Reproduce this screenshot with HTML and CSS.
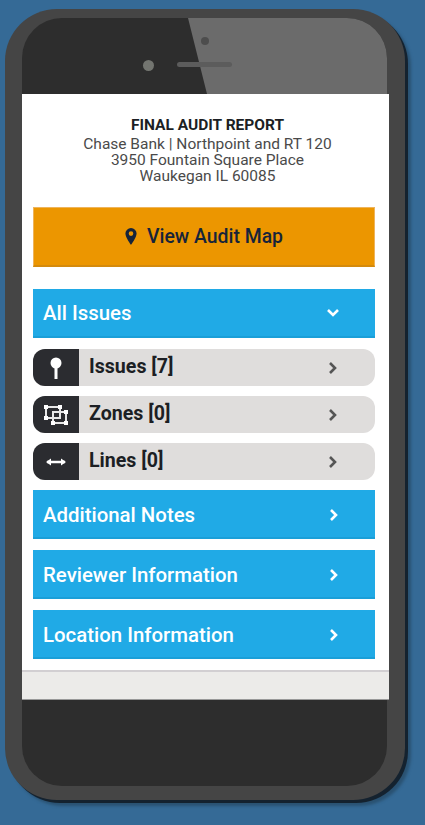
FILE: index.html
```html
<!DOCTYPE html>
<html lang="en">
<head>
<meta charset="utf-8">
<title>Final Audit Report</title>
<link rel="stylesheet" href="styles.css">
</head>
<body>
<div class="phone">
  <div class="bezel">
    <div class="top">
      <svg class="glare" width="365" height="76" viewBox="0 0 365 76"><polygon points="166,0 365,0 365,76 185,76" fill="#6b6b6b"/></svg>
      <span class="camera"></span>
      <span class="lens"></span>
      <span class="speaker"></span>
    </div>
    <main class="screen">
      <div class="content">
        <header class="head">
          <h1>FINAL AUDIT REPORT</h1>
          <p>Chase Bank | Northpoint and RT 120</p>
          <p>3950 Fountain Square Place</p>
          <p>Waukegan IL 60085</p>
        </header>
        <div class="map">
          <svg width="12" height="17" viewBox="0 0 12 17"><path fill-rule="evenodd" d="M6 0a5.6 5.6 0 0 0-5.6 5.6C.4 9.4 6 17 6 17s5.6-7.600 5.600-11.400A5.600 5.600 0 0 0 6 0zm0 3.300a2.300 2.300 0 1 1 0 4.600 2.300 2.300 0 0 1 0-4.600z" fill="#16243a"/></svg>
          <span>View Audit Map</span>
        </div>
        <div class="bar open">
          <span>All Issues</span>
          <svg width="14" height="10" viewBox="0 0 14 10"><path d="M2 2l5 5 5-5" fill="none" stroke="#fff" stroke-width="2.600"/></svg>
        </div>
        <div class="rows">
          <div class="row">
            <span class="tag"><svg width="20" height="26" viewBox="0 0 20 26"><circle cx="10" cy="8" r="5.500" fill="#fff"/><rect x="8.500" y="12" width="3" height="12" fill="#fff"/></svg></span>
            <span class="label">Issues [7]</span>
            <svg class="go" width="10" height="14" viewBox="0 0 10 14"><path d="M2 2l5 5-5 5" fill="none" stroke="#555" stroke-width="2.600"/></svg>
          </div>
          <div class="row">
            <span class="tag"><svg width="28" height="24" viewBox="0 0 28 24"><g fill="none" stroke="#e8e8e8" stroke-width="2"><rect x="4" y="4" width="14" height="11"/><rect x="11" y="9" width="13" height="11"/></g><g fill="#fff"><rect x="2" y="2" width="4" height="4"/><rect x="16" y="2" width="4" height="4"/><rect x="2" y="13" width="4" height="4"/><rect x="22" y="7" width="4" height="4"/><rect x="9" y="18" width="4" height="4"/><rect x="22" y="18" width="4" height="4"/></g></svg></span>
            <span class="label">Zones [0]</span>
            <svg class="go" width="10" height="14" viewBox="0 0 10 14"><path d="M2 2l5 5-5 5" fill="none" stroke="#555" stroke-width="2.600"/></svg>
          </div>
          <div class="row">
            <span class="tag"><svg width="24" height="12" viewBox="0 0 24 12"><path d="M3 6h18" stroke="#fff" stroke-width="2.500"/><path d="M2 6l5-3.500v7zM22 6l-5-3.500v7z" fill="#fff"/></svg></span>
            <span class="label">Lines [0]</span>
            <svg class="go" width="10" height="14" viewBox="0 0 10 14"><path d="M2 2l5 5-5 5" fill="none" stroke="#555" stroke-width="2.600"/></svg>
          </div>
        </div>
        <div class="bar">
          <span>Additional Notes</span>
          <svg width="14" height="14" viewBox="0 0 14 14"><path d="M4 2l5 5-5 5" fill="none" stroke="#fff" stroke-width="2.600"/></svg>
        </div>
        <div class="bar">
          <span>Reviewer Information</span>
          <svg width="14" height="14" viewBox="0 0 14 14"><path d="M4 2l5 5-5 5" fill="none" stroke="#fff" stroke-width="2.600"/></svg>
        </div>
        <div class="bar">
          <span>Location Information</span>
          <svg width="14" height="14" viewBox="0 0 14 14"><path d="M4 2l5 5-5 5" fill="none" stroke="#fff" stroke-width="2.600"/></svg>
        </div>
      </div>
      <div class="footer"></div>
    </main>
  </div>
</div>
</body>
</html>
```
FILE: styles.css
```css
* { box-sizing: border-box; }
html, body { margin: 0; height: 100%; }
body {
  background: #356a96;
  padding: 9px 0 0 5px;
  overflow: hidden;
  font-family: Roboto, "Liberation Sans", sans-serif;
}
.phone {
  width: 400px;
  height: 791px;
  padding: 9px 18px 14px 17px;
  background: #454545;
  border-radius: 52px;
  box-shadow: 3px 3px 0 #14222f, 6px 6px 3px #2a5272;
}
.bezel {
  width: 365px;
  height: 768px;
  background: #2d2d2d;
  border-radius: 40px;
  display: flex;
  flex-direction: column;
}
.top {
  position: relative;
  height: 76px;
  flex: none;
  border-radius: 40px 40px 0 0;
  overflow: hidden;
}
.glare { position: absolute; left: 0; top: 0; display: block; }
.camera {
  position: absolute; left: 179px; top: 19px;
  width: 8px; height: 8px; border-radius: 50%;
  background: #4d4d4d;
}
.lens {
  position: absolute; left: 121px; top: 42px;
  width: 11px; height: 11px; border-radius: 50%;
  background: #737570;
}
.speaker {
  position: absolute; left: 155px; top: 44px;
  width: 55px; height: 5px; border-radius: 3px;
  background: #5c5c5c;
}
.screen {
  width: 367px;
  height: 605px;
  background: #fff;
  display: flex;
  flex-direction: column;
}
.content {
  flex: 1;
  padding: 23px 14px 0 11px;
}
.head { text-align: center; height: 90px; padding-left: 7px; color: #4a4a4a; }
.head h1 {
  margin: 0 0 3px;
  font-size: 15.500px;
  line-height: 16px;
  font-weight: 700;
  color: #1c1f24;
}
.head p { margin: 0; font-size: 15.500px; line-height: 16px; }
.map {
  height: 60px;
  background: #ec9600;
  border: 1px solid #eeb45c;
  border-bottom: 2px solid #d48a0c;
  display: flex;
  align-items: center;
  justify-content: center;
  gap: 10px;
  font-size: 19.400px;
  font-weight: 500;
  color: #16243a;
  margin-bottom: 22px;
}
.bar {
  height: 49px;
  background: #20aae6;
  border-bottom: 2px solid #1a9fd8;
  padding: 2px 34px 0 10px;
  display: flex;
  align-items: center;
  justify-content: space-between;
  font-size: 20.400px;
  font-weight: 500;
  color: #fff;
  margin-bottom: 11px;
}
.bar.open { padding: 0 35px 0 10px; }
.rows { display: flex; flex-direction: column; gap: 10px; margin-bottom: 10px; }
.row {
  height: 37px;
  background: #dfdddc;
  border-radius: 12px;
  display: flex;
  align-items: center;
  overflow: hidden;
  padding-right: 37px;
}
.tag {
  width: 46px;
  height: 37px;
  flex: none;
  background: #2b2c30;
  display: flex;
  align-items: center;
  justify-content: center;
}
.label {
  flex: 1;
  padding: 0 0 3px 10px;
  font-size: 19.600px;
  font-weight: 700;
  color: #1c1f24;
}
.go { display: block; }
.footer {
  height: 30px;
  flex: none;
  background: #ecebe9;
  border-top: 2px solid #d2cfd2;
  border-bottom: 1px solid #999;
}
```
